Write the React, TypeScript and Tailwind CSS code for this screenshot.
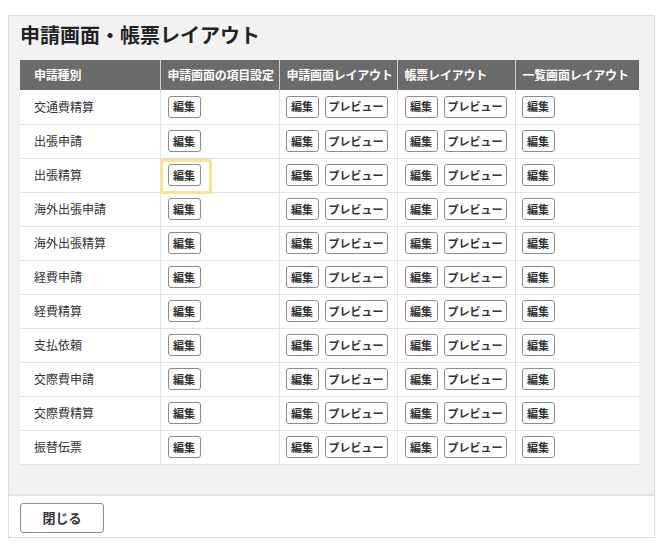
import React from "react";

const rows = [
  "交通費精算",
  "出張申請",
  "出張精算",
  "海外出張申請",
  "海外出張精算",
  "経費申請",
  "経費精算",
  "支払依頼",
  "交際費申請",
  "交際費精算",
  "振替伝票",
];

const headers = [
  { label: "申請種別", w: "w-[140px]", pl: "pl-[14px]" },
  { label: "申請画面の項目設定", w: "w-[119px]", pl: "pl-[7px]" },
  { label: "申請画面レイアウト", w: "w-[118px]", pl: "pl-[7px]" },
  { label: "帳票レイアウト", w: "w-[118px]", pl: "pl-[7px]" },
  { label: "一覧画面レイアウト", w: "w-[124px]", pl: "pl-[7px]" },
];

function SmallButton({ children, wide }: { children: React.ReactNode; wide?: boolean }) {
  return (
    <button
      className={`${wide ? "w-[63px]" : "w-[33px]"} h-[22px] rounded-[3px] border border-[#8c8c8c] bg-white text-[11px] font-bold text-[#333] leading-none`}
    >
      {children}
    </button>
  );
}

export default function App() {
  return (
    <div
      className="pt-[15px] pl-[8px]"
      style={{ fontFamily: '"Noto Sans CJK JP", "Noto Sans", sans-serif' }}
    >
      <div className="w-[647px] border border-[#d9d9d9] bg-[#f2f2f2]">
        <div className="px-[11px]">
          <h1 className="pt-[5px] pb-[11px] text-[20px] leading-[28px] font-bold text-[#222]">
            申請画面・帳票レイアウト
          </h1>
          <table className="border-collapse w-[619px] table-fixed">
            <thead>
              <tr className="h-[30px] bg-[#6b6b6b]">
                {headers.map((h, i) => (
                  <th
                    key={h.label}
                    className={`${h.w} ${h.pl} text-left text-[12px] font-bold text-white tracking-[-0.2px] ${i > 0 ? "border-l border-[#d0d0d0]" : ""}`}
                  >
                    {h.label}
                  </th>
                ))}
              </tr>
            </thead>
            <tbody>
              {rows.map((r, idx) => (
                <tr key={r} className="h-[34px] bg-white border-b border-[#e2e2e2]">
                  <td className="pl-[14px] text-[12px] text-[#333]">{r}</td>
                  <td className="relative pl-[7px] border-l border-[#e2e2e2]">
                    <div className="flex items-center">
                      <SmallButton>編集</SmallButton>
                    </div>
                    {idx === 2 && (
                      <div className="absolute left-[-1px] top-0 w-[52px] h-[35px] border-[3px] border-[#fbe38e] rounded-[2px]" />
                    )}
                  </td>
                  <td className="pl-[6px] border-l border-[#e2e2e2]">
                    <div className="flex items-center gap-[6px]">
                      <SmallButton>編集</SmallButton>
                      <SmallButton wide>プレビュー</SmallButton>
                    </div>
                  </td>
                  <td className="pl-[7px] border-l border-[#e2e2e2]">
                    <div className="flex items-center gap-[6px]">
                      <SmallButton>編集</SmallButton>
                      <SmallButton wide>プレビュー</SmallButton>
                    </div>
                  </td>
                  <td className="pl-[6px] border-l border-[#e2e2e2]">
                    <div className="flex items-center">
                      <SmallButton>編集</SmallButton>
                    </div>
                  </td>
                </tr>
              ))}
            </tbody>
          </table>
          <div className="h-[29px]" />
        </div>
        <div className="border-t-2 border-[#e3e3e3] bg-white pl-[11px] pt-[7px] pb-[4px]">
          <button className="w-[84px] h-[30px] rounded-[3px] border border-[#8c8c8c] bg-white text-[13px] font-bold text-[#333]">
            閉じる
          </button>
        </div>
      </div>
    </div>
  );
}
